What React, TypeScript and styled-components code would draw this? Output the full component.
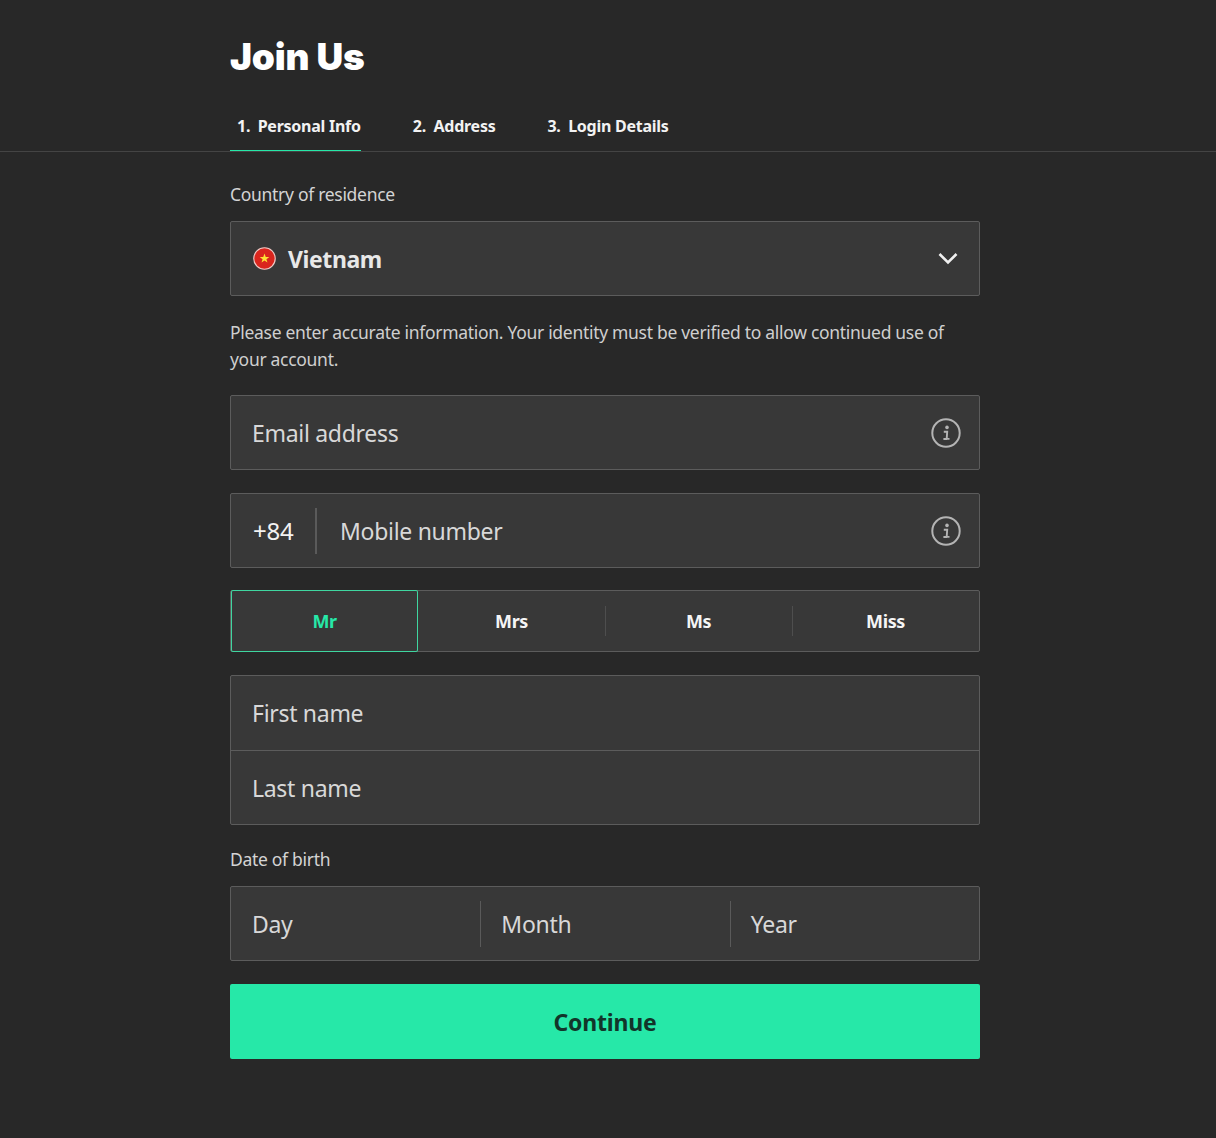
import React from 'react';
import styled, { createGlobalStyle } from 'styled-components';

const GlobalStyle = createGlobalStyle`
    html, body {
        margin: 0;
        background-color: #282828;
    }
    body {
        font-family: "Noto Sans", "Open Sans", sans-serif;
    }
`;

const Page = styled.div`
    width: 1216px;
    height: 1138px;
    overflow: hidden;
    background-color: #282828;
    color: #e6e6e6;
`;

const Header = styled.header`
    height: 151px;
    border-bottom: 1px solid #444;
`;

const Column = styled.div`
    width: 750px;
    margin-left: 230px;
`;

const Title = styled.h1`
    margin: 0;
    padding-top: 33px;
    height: 47px;
    font-family: Inter, "Noto Sans", sans-serif;
    font-size: 37px;
    line-height: 47px;
    font-weight: 900;
    letter-spacing: -0.2px;
    color: #fff;
`;

const Tabs = styled.nav`
    display: flex;
    gap: 52px;
    margin-top: 20px;
`;

const Tab = styled.div<{ $active?: boolean }>`
    height: 51px;
    line-height: 52px;
    box-sizing: border-box;
    padding-left: ${p => (p.$active ? '7px' : '0')};
    font-size: 16px;
    font-weight: 700;
    letter-spacing: -0.25px;
    white-space: nowrap;
    color: #f2f2f2;
    border-bottom: 1px solid ${p => (p.$active ? '#26e8a8' : 'transparent')};

    span {
        margin-right: 7.5px;
    }
`;

const Label = styled.div`
    font-size: 17.5px;
    line-height: 24px;
    color: #d4d4d4;
    letter-spacing: -0.3px;
`;

const Form = styled.main`
    display: flex;
    flex-direction: column;
    padding-top: 30px;
`;

const Field = styled.div`
    display: flex;
    align-items: center;
    box-sizing: border-box;
    height: 75px;
    padding: 0 18px 0 21px;
    background-color: #383838;
    border: 1px solid #5c5c5c;
    border-radius: 2px;
`;

const CountrySelect = styled(Field)`
    margin-top: 15px;
    padding: 0 21px 0 22px;
`;

const Flag = styled.svg`
    width: 23px;
    height: 23px;
    flex: none;
`;

const CountryName = styled.div`
    flex: 1;
    margin-left: 12px;
    font-size: 23px;
    font-weight: 700;
    letter-spacing: -0.4px;
    color: #e8e8e8;
`;

const Notice = styled.p`
    margin: 23px 0 22px;
    font-size: 17.5px;
    line-height: 27px;
    letter-spacing: -0.3px;
    color: #cfcfcf;
`;

const Placeholder = styled.div`
    flex: 1;
    font-size: 23px;
    letter-spacing: -0.3px;
    color: #d8d8d8;
`;

const Prefix = styled.div`
    width: 64px;
    margin: 0 23px 0 1px;
    height: 46px;
    line-height: 46px;
    box-sizing: border-box;
    border-right: 2px solid #5a5a5a;
    font-size: 24px;
    letter-spacing: -0.2px;
    color: #f2f2f2;
`;

const MobileField = styled(Field)`
    margin-top: 23px;
`;

const Salutations = styled.div`
    display: flex;
    box-sizing: border-box;
    height: 62px;
    margin-top: 22px;
    background-color: #383838;
    border: 1px solid #5c5c5c;
    border-radius: 2px;
`;

const Salutation = styled.div<{ $active?: boolean; $divider?: boolean }>`
    position: relative;
    flex: 0 0 25%;
    display: flex;
    align-items: center;
    justify-content: center;
    margin: ${p => (p.$active ? '-1px 0' : '0')};
    font-size: 18px;
    font-weight: 700;
    letter-spacing: -0.4px;
    color: ${p => (p.$active ? '#26e8a8' : '#f5f5f5')};
    box-shadow: ${p => (p.$active ? 'inset 0 0 0 1px #3fd6a0' : 'none')};
    border-radius: 2px;

    ${p =>
        p.$divider &&
        `&::after {
            content: '';
            position: absolute;
            right: -1px;
            top: 15px;
            height: 30px;
            width: 1px;
            background-color: #4e4e4e;
        }`}
`;

const NameGroup = styled.div`
    margin-top: 23px;
    background-color: #383838;
    border: 1px solid #5c5c5c;
    border-radius: 2px;
`;

const NameRow = styled.div`
    display: flex;
    align-items: center;
    box-sizing: border-box;
    height: 74px;
    padding-left: 21px;

    & + & {
        border-top: 1px solid #5c5c5c;
    }
`;

const DateLabel = styled(Label)`
    margin-top: 22px;
`;

const DateGroup = styled.div`
    display: flex;
    box-sizing: border-box;
    height: 75px;
    margin-top: 15px;
    background-color: #383838;
    border: 1px solid #5c5c5c;
    border-radius: 2px;
`;

const DatePart = styled.div`
    flex: 1;
    position: relative;
    display: flex;
    align-items: center;
    padding-left: 21px;

    & + &::before {
        content: '';
        position: absolute;
        left: 0;
        top: 14px;
        height: 46px;
        width: 1px;
        background-color: #5a5a5a;
    }
`;

const ContinueButton = styled.button`
    height: 75px;
    margin-top: 23px;
    border: none;
    border-radius: 2px;
    background-color: #26e8a8;
    color: #12352a;
    font-family: inherit;
    font-size: 23px;
    font-weight: 700;
    letter-spacing: -0.2px;
`;

const InfoIcon = () => (
    <svg width="30" height="30" viewBox="0 0 30 30" fill="none">
        <circle cx="15" cy="15" r="13.7" stroke="#b4b4b4" strokeWidth="2" />
        <circle cx="16" cy="9.4" r="1.8" fill="#b4b4b4" />
        <path d="M12.8 13.7h3.4l-.5 7.2h2.8M12.4 21h3.6" stroke="#b4b4b4" strokeWidth="1.9" />
    </svg>
);

const Chevron = () => (
    <svg width="20" height="13" viewBox="0 0 20 13" fill="none">
        <path d="M1.5 2 10 10.5 18.5 2" stroke="#f0f0f0" strokeWidth="2.6" />
    </svg>
);

const titles = ['Mr', 'Mrs', 'Ms', 'Miss'];

export default function App() {
    return (
        <Page>
            <GlobalStyle />
            <Header>
                <Column>
                    <Title>Join Us</Title>
                    <Tabs>
                        <Tab $active>
                            <span>1.</span>Personal Info
                        </Tab>
                        <Tab>
                            <span>2.</span>Address
                        </Tab>
                        <Tab>
                            <span>3.</span>Login Details
                        </Tab>
                    </Tabs>
                </Column>
            </Header>
            <Column>
                <Form>
                    <Label>Country of residence</Label>
                    <CountrySelect>
                        <Flag viewBox="0 0 24 24">
                            <circle cx="12" cy="12" r="11.2" fill="#da251d" stroke="#f0c8c4" strokeWidth="1.2" />
                            <polygon
                                points="12,6.8 13.3,10.4 17,10.4 14,12.7 15.1,16.3 12,14.1 8.9,16.3 10,12.7 7,10.4 10.7,10.4"
                                fill="#ffe135"
                            />
                        </Flag>
                        <CountryName>Vietnam</CountryName>
                        <Chevron />
                    </CountrySelect>
                    <Notice>
                        Please enter accurate information. Your identity must be verified to allow continued use of
                        your account.
                    </Notice>
                    <Field>
                        <Placeholder>Email address</Placeholder>
                        <InfoIcon />
                    </Field>
                    <MobileField>
                        <Prefix>+84</Prefix>
                        <Placeholder>Mobile number</Placeholder>
                        <InfoIcon />
                    </MobileField>
                    <Salutations>
                        {titles.map((title, i) => (
                            <Salutation key={title} $active={i === 0} $divider={i === 1 || i === 2}>
                                {title}
                            </Salutation>
                        ))}
                    </Salutations>
                    <NameGroup>
                        <NameRow>
                            <Placeholder>First name</Placeholder>
                        </NameRow>
                        <NameRow>
                            <Placeholder>Last name</Placeholder>
                        </NameRow>
                    </NameGroup>
                    <DateLabel>Date of birth</DateLabel>
                    <DateGroup>
                        <DatePart>
                            <Placeholder>Day</Placeholder>
                        </DatePart>
                        <DatePart>
                            <Placeholder>Month</Placeholder>
                        </DatePart>
                        <DatePart>
                            <Placeholder>Year</Placeholder>
                        </DatePart>
                    </DateGroup>
                    <ContinueButton>Continue</ContinueButton>
                </Form>
            </Column>
        </Page>
    );
}
